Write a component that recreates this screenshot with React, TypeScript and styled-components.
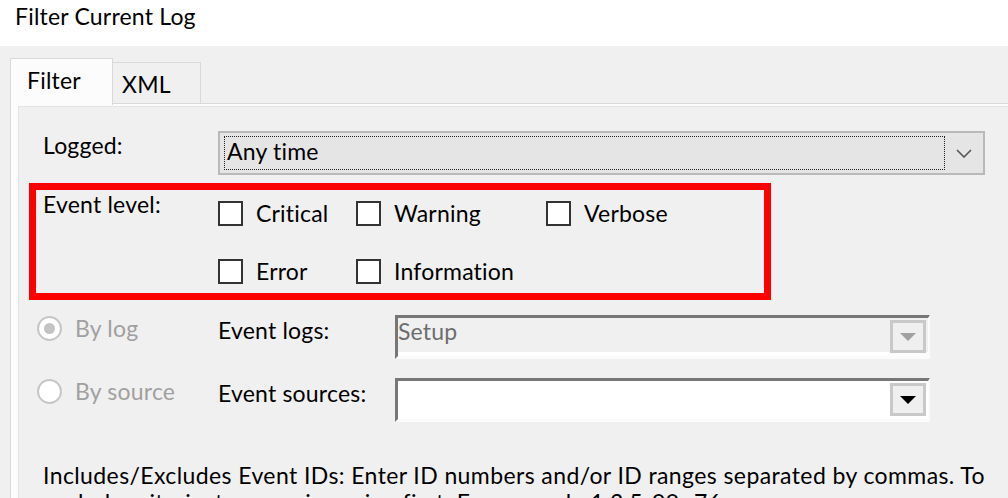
import React, { FC } from 'react'
import styled, { createGlobalStyle } from 'styled-components'

const GlobalStyle = createGlobalStyle`
  html, body {
    margin: 0;
    padding: 0;
  }
  body {
    width: 1008px;
    height: 498px;
    overflow: hidden;
    background: #f0f0f0;
    font-family: "Segoe UI", Lato, "Noto Sans", sans-serif;
    font-size: 23px;
    line-height: 27px;
    letter-spacing: 0.2px;
    color: #000;
  }
`

const Window = styled.div`
  height: 498px;
  overflow: hidden;
`

const TitleBar = styled.div`
  height: 46px;
  box-sizing: border-box;
  background: #fff;
  padding: 3px 0 0 15px;
`

const Body = styled.div`
  padding: 12px 0 0 10px;
`

const TabStrip = styled.div`
  display: flex;
  align-items: flex-start;
  height: 45px;
`

const Tab = styled.div<{ $active?: boolean }>`
  box-sizing: border-box;
  position: relative;
  z-index: 1;
  height: ${p => (p.$active ? '47px' : '41px')};
  margin-top: ${p => (p.$active ? '0' : '4px')};
  width: ${p => (p.$active ? '103px' : '88px')};
  padding: ${p => (p.$active ? '8px 0 0 16px' : '8px 0 0 9px')};
  background: ${p => (p.$active ? '#fcfcfc' : '#f0f0f0')};
  border: 1px solid #d9d9d9;
  border-bottom: none;
  border-left: ${p => (p.$active ? '1px solid #d9d9d9' : 'none')};
`

const TabBody = styled.div`
  border: 1px solid #d9d9d9;
  border-right: none;
  background: #fcfcfc;
  padding: 2px 0 0 7px;
`

const Page = styled.div`
  background: #f0f0f0;
  border-top: 1px solid #e4e4e4;
  border-left: 1px solid #e4e4e4;
  padding: 24px 0 0 10px;
  height: 380px;
`

const Row = styled.div`
  display: flex;
  align-items: flex-start;
  padding-left: 14px;
`

const Label = styled.div`
  width: 175px;
  flex: none;
  white-space: nowrap;
  padding-top: 1px;
`

const SelectBox = styled.div`
  box-sizing: border-box;
  width: 767px;
  height: 44px;
  display: flex;
  border: 2px solid #b9b9b9;
  background: #e5e5e5;
`

const FocusRect = styled.div`
  flex: 1;
  margin: 3px 0 3px 4px;
  border: 1px dotted #222;
  padding: 1px 0 0 2px;
`

const Chevron = styled.div`
  width: 38px;
  display: flex;
  align-items: center;
  justify-content: center;
`

const Highlight = styled.div`
  box-sizing: border-box;
  width: 742px;
  height: 117px;
  margin-top: 8px;
  border: 7px solid #ff0000;
  padding-left: 7px;
  display: flex;
  align-items: flex-start;
`

const CheckGrid = styled.div`
  display: grid;
  grid-template-columns: 138px 190px auto;
  row-gap: 32px;
  padding-top: 10px;
`

const CheckItem = styled.label`
  display: flex;
  align-items: center;
  height: 26px;
`

const Box = styled.span`
  box-sizing: border-box;
  width: 25px;
  height: 25px;
  border: 2px solid #333;
  background: #fff;
  margin-right: 13px;
  flex: none;
`

const SourceGrid = styled.div`
  display: grid;
  grid-template-columns: 181px 177px 535px;
  row-gap: 19px;
  margin-top: 15px;
  padding-left: 8px;
  align-items: start;
`

const RadioItem = styled.div`
  display: flex;
  align-items: center;
  height: 27px;
  color: #a0a0a0;
`

const Radio = styled.span<{ $checked?: boolean }>`
  box-sizing: border-box;
  width: 25px;
  height: 25px;
  border-radius: 50%;
  border: 2px solid #c6c6c6;
  background: #fff;
  margin-right: 13px;
  display: flex;
  align-items: center;
  justify-content: center;
  &::after {
    content: '';
    display: ${p => (p.$checked ? 'block' : 'none')};
    width: 11px;
    height: 11px;
    border-radius: 50%;
    background: #c4c4c4;
  }
`

const FieldLabel = styled.div`
  padding-top: 2px;
  white-space: nowrap;
`

const Combo = styled.div<{ $disabled?: boolean }>`
  box-sizing: border-box;
  height: 44px;
  display: flex;
  align-items: flex-start;
  border-style: solid;
  border-width: 3px 2px 3px 3px;
  border-color: #777 #fbfbfb #fbfbfb #777;
  background: ${p => (p.$disabled ? '#f0f0f0' : '#fff')};
  box-shadow: ${p => (p.$disabled ? 'inset 0 -4px 0 #fff' : 'none')};
  padding-right: 2px;
`

const ComboText = styled.div`
  flex: 1;
  color: #6d6d6d;
`

const DropButton = styled.div<{ $disabled?: boolean }>`
  box-sizing: border-box;
  width: 36px;
  height: 33px;
  margin-top: 2px;
  border: 3px solid #c8c8c8;
  background: #efefef;
  display: flex;
  align-items: center;
  justify-content: center;
  color: ${p => (p.$disabled ? '#a0a0a0' : '#000')};
`

const Note = styled.div`
  width: 966px;
  margin-top: 40px;
  padding-left: 14px;
  line-height: 27px;
  letter-spacing: 0.4px;
`

const Arrow: FC = () => (
  <svg width="16" height="8" viewBox="0 0 16 8">
    <polygon points="0,0 16,0 8,8" fill="currentColor" />
  </svg>
)

const levels = [
  ['Critical', 'Warning', 'Verbose'],
  ['Error', 'Information'],
]

const App: FC = () => {
  return (
    <>
      <GlobalStyle />
      <Window>
        <TitleBar>Filter Current Log</TitleBar>
        <Body>
          <TabStrip>
            <Tab $active>Filter</Tab>
            <Tab>XML</Tab>
          </TabStrip>
          <TabBody>
            <Page>
              <Row>
                <Label>Logged:</Label>
                <SelectBox>
                  <FocusRect>Any time</FocusRect>
                  <Chevron>
                    <svg width="16" height="9" viewBox="0 0 16 9">
                      <polyline points="1,1 8,8 15,1" fill="none" stroke="#555" strokeWidth="1.6" />
                    </svg>
                  </Chevron>
                </SelectBox>
              </Row>
              <Highlight>
                <Label>Event level:</Label>
                <CheckGrid>
                  {levels.flatMap(row =>
                    [0, 1, 2].map(i =>
                      row[i] ? (
                        <CheckItem key={row[i]}>
                          <Box />
                          {row[i]}
                        </CheckItem>
                      ) : (
                        <span key={'empty' + i} />
                      )
                    )
                  )}
                </CheckGrid>
              </Highlight>
              <SourceGrid>
                <RadioItem>
                  <Radio $checked />
                  By log
                </RadioItem>
                <FieldLabel>Event logs:</FieldLabel>
                <Combo $disabled>
                  <ComboText>Setup</ComboText>
                  <DropButton $disabled>
                    <Arrow />
                  </DropButton>
                </Combo>
                <RadioItem>
                  <Radio />
                  By source
                </RadioItem>
                <FieldLabel>Event sources:</FieldLabel>
                <Combo>
                  <ComboText />
                  <DropButton>
                    <Arrow />
                  </DropButton>
                </Combo>
              </SourceGrid>
              <Note>
                Includes/Excludes Event IDs: Enter ID numbers and/or ID ranges separated by commas. To
                exclude criteria, type a minus sign first. For example 1,3,5-99,-76
              </Note>
            </Page>
          </TabBody>
        </Body>
      </Window>
    </>
  )
}

export default App
